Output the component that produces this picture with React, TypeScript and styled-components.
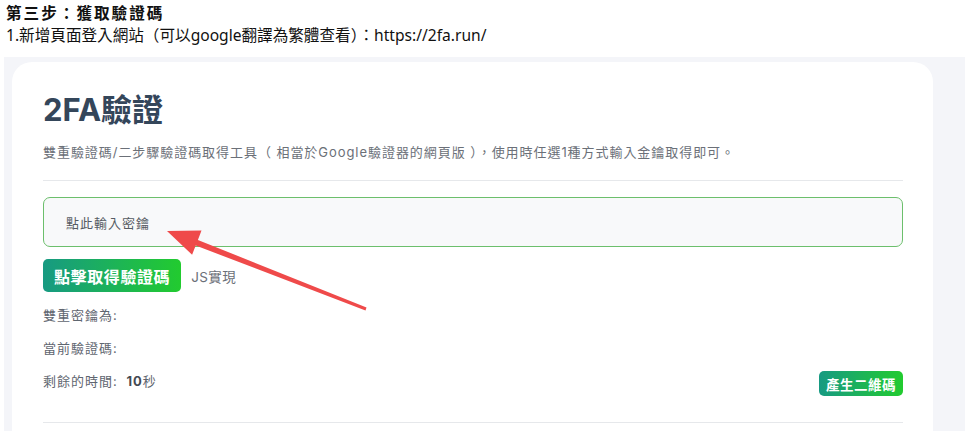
import React from "react";
import styled, { createGlobalStyle } from "styled-components";

const GlobalStyle = createGlobalStyle`
  body {
    margin: 0;
    background: #ffffff;
    font-family: "Noto Sans", "Noto Sans CJK TC", sans-serif;
  }
`;

const Page = styled.div`
  position: relative;
  width: 973px;
  height: 442px;
  overflow: hidden;
  background: #ffffff;
`;

const Intro = styled.div`
  padding: 2px 0 0 6px;
  color: #111;
  font-size: 15.6px;
  line-height: 22px;
`;

const StepTitle = styled.div`
  font-weight: 700;
  letter-spacing: 2px;
`;

const Frame = styled.div`
  margin: 11px 0 0 4px;
  width: 961px;
  height: 374px;
  box-sizing: border-box;
  padding: 5px 32px 0 8px;
  background: #f4f5f9;
  overflow: hidden;
`;

const Card = styled.div`
  height: 100%;
  box-sizing: border-box;
  background: #ffffff;
  border-radius: 20px 20px 0 0;
  padding: 28px 30px 0 31px;
  font-family: "Inter", "Noto Sans CJK TC", sans-serif;
  color: #5f6670;
  font-size: 13px;
  letter-spacing: 1px;
`;

const Title = styled.h1`
  margin: 0;
  font-size: 31px;
  line-height: 40px;
  font-weight: 700;
  color: #34465a;
  letter-spacing: 0;
`;

const Subtitle = styled.p`
  margin: 12px 0 0;
  line-height: 20px;
  color: #6b7078;
  letter-spacing: 0.95px;
`;

const Divider = styled.hr<{ $gap: number }>`
  margin: ${(p) => p.$gap}px 0 0;
  border: 0;
  border-top: 1px solid #e6e8eb;
`;

const KeyInput = styled.div`
  margin-top: 16px;
  height: 50px;
  box-sizing: border-box;
  border: 1px solid #6cbf6c;
  border-radius: 7px;
  background: #f8f9fa;
  padding-left: 22px;
  display: flex;
  align-items: center;
  color: #555b62;
`;

const ActionRow = styled.div`
  margin-top: 12px;
  display: flex;
  align-items: center;
  gap: 10px;
`;

const GreenButton = styled.button<{ $size: "lg" | "sm" }>`
  border: 0;
  border-radius: 5px;
  color: #ffffff;
  font-family: "Noto Sans CJK TC", sans-serif;
  font-weight: 700;
  background: linear-gradient(90deg, #179a82 0%, #22cb2f 100%);
  padding: ${(p) => (p.$size === "lg" ? "0 11px" : "0 7px")};
  height: ${(p) => (p.$size === "lg" ? "33px" : "25px")};
  font-size: ${(p) => (p.$size === "lg" ? "16px" : "13.5px")};
  letter-spacing: ${(p) => (p.$size === "lg" ? "0.6px" : "0.5px")};
`;

const Note = styled.span`
  color: #6b7078;
  font-size: 13.5px;
  letter-spacing: 0.4px;
`;

const InfoLine = styled.div`
  margin-top: 13px;
  line-height: 20px;
`;

const InfoRow = styled.div`
  display: flex;
  justify-content: space-between;
  align-items: flex-start;
`;

const Strong = styled.b`
  color: #444a52;
  font-weight: 700;
  margin-left: 4px;
`;

const Arrow = styled.svg`
  position: absolute;
  left: 0;
  top: 0;
  pointer-events: none;
`;

export default function App() {
  return (
    <Page>
      <GlobalStyle />
      <Intro>
        <StepTitle>第三步：獲取驗證碼</StepTitle>
        <div>1.新增頁面登入網站（可以google翻譯為繁體查看）：https://2fa.run/</div>
      </Intro>
      <Frame>
        <Card>
          <Title>2FA驗證</Title>
          <Subtitle>
            雙重驗證碼/二步驟驗證碼取得工具（ 相當於Google驗證器的網頁版 ），使用時任選1種方式輸入金鑰取得即可。
          </Subtitle>
          <Divider $gap={18} />
          <KeyInput>點此輸入密鑰</KeyInput>
          <ActionRow>
            <GreenButton $size="lg">點擊取得驗證碼</GreenButton>
            <Note>JS實現</Note>
          </ActionRow>
          <InfoLine>雙重密鑰為:</InfoLine>
          <InfoLine>當前驗證碼:</InfoLine>
          <InfoRow>
            <InfoLine>
              剩餘的時間: <Strong>10</Strong>秒
            </InfoLine>
            <InfoLine as="div">
              <GreenButton $size="sm">產生二維碼</GreenButton>
            </InfoLine>
          </InfoRow>
          <Divider $gap={26} />
        </Card>
      </Frame>
      <Arrow width="973" height="442" viewBox="0 0 973 442">
        <polygon
          fill="#ef4a4a"
          points="167,231 201.5,230.6 197.9,239.9 366.5,307.6 365.5,310.4 195.7,245.5 192.1,254.8"
        />
      </Arrow>
    </Page>
  );
}
